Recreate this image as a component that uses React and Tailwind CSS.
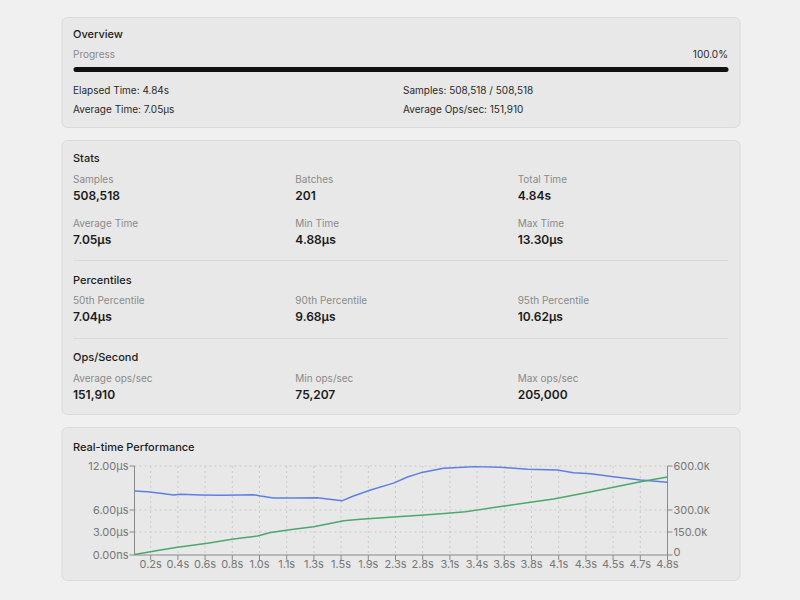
import React from "react";

const blue = [[134,491],[147,491.7],[160,493.3],[173,495],[180,494.3],[200,495],[220,495.3],[240,495],[253,494.7],[260,496],[273,498],[293,498],[317,497.7],[327,499],[342,500.7],[353,496],[370,490],[393,483.2],[407,477],[420,472.8],[443,468.2],[467,467],[473,466.6],[500,467.2],[527,469.3],[557,470],[573,472.7],[590,473.7],[613,476.7],[640,480],[667,482.3]];
const green = [[134,554.5],[160,550],[177,547.3],[207,543.3],[233,539],[257,536],[270,532.5],[293,529.3],[313,526.7],[327,524],[343,520.7],[360,519.2],[393,517],[420,515.2],[447,513.3],[465,511.8],[500,506.5],[530,502.3],[553,499],[583,493.3],[613,487.3],[640,481.7],[667,477]];

const OX = 73, OY = 458;
const pts = (arr) => arr.map(([x, y]) => `${x - OX},${y - OY}`).join(" ");

const xLabels = ["0.2s","0.4s","0.6s","0.8s","1.0s","1.1s","1.3s","1.5s","1.9s","2.3s","2.8s","3.1s","3.4s","3.6s","3.8s","4.1s","4.3s","4.5s","4.7s","4.8s"];

function Chart() {
  const L = 134 - OX, R = 667 - OX, T = 466 - OY, B = 555 - OY;
  const yTicks = [
    { y: T, l: "12.00µs", r: "600.0k" },
    { y: 510 - OY, l: "6.00µs", r: "300.0k" },
    { y: 532 - OY, l: "3.00µs", r: "150.0k" },
    { y: B, l: "0.00ns", r: "0" },
  ];
  const xs = xLabels.map((_, i) => R - (19 - i) * 27.2);
  return (
    <svg width="655" height="112" className="block" style={{ fontFamily: "Inter, 'Noto Sans', sans-serif" }}>
      {yTicks.slice(0, 3).map((t, i) => (
        <line key={"h" + i} x1={L} x2={R} y1={t.y} y2={t.y} stroke="#c9c9c9" strokeDasharray="2 3" strokeWidth="1" />
      ))}
      {xs.map((x, i) => (
        <line key={"v" + i} x1={x} x2={x} y1={T} y2={B} stroke="#c9c9c9" strokeDasharray="2 3" strokeWidth="1" />
      ))}
      <line x1={L} x2={L} y1={T} y2={B} stroke="#8a8a8a" strokeWidth="1" />
      <line x1={R} x2={R} y1={T} y2={B} stroke="#8a8a8a" strokeWidth="1" />
      <line x1={L} x2={R} y1={B} y2={B} stroke="#8a8a8a" strokeWidth="1" />
      {yTicks.map((t, i) => (
        <g key={"y" + i}>
          <line x1={L - 5} x2={L} y1={t.y} y2={t.y} stroke="#8a8a8a" />
          <line x1={R} x2={R + 5} y1={t.y} y2={t.y} stroke="#8a8a8a" />
          <text x={L - 6} y={t.y + 4} textAnchor="end" fontSize="11" fill="#777">{t.l}</text>
          <text x={R + 6} y={t.y + (i === 3 ? 1 : 4)} textAnchor="start" fontSize="11" fill="#777">{t.r}</text>
        </g>
      ))}
      {xs.map((x, i) => (
        <g key={"x" + i}>
          <line x1={x} x2={x} y1={B} y2={B + 5} stroke="#8a8a8a" />
          <text x={x} y={B + 13} textAnchor="middle" fontSize="11" fill="#777">{xLabels[i]}</text>
        </g>
      ))}
      <polyline points={pts(blue)} fill="none" stroke="#5b80e4" strokeWidth="1.4" strokeLinejoin="round" />
      <polyline points={pts(green)} fill="none" stroke="#4aa86a" strokeWidth="1.4" strokeLinejoin="round" />
    </svg>
  );
}

function Cell({ label, value }) {
  return (
    <div className="flex flex-col">
      <div className="text-[10px] leading-[14px] text-[#8a8a8a]">{label}</div>
      <div className="pt-[1px] text-[12px] leading-[18px] font-semibold text-[#1a1a1a]">{value}</div>
    </div>
  );
}

function Section({ title, rows, pt, mt }) {
  return (
    <div className={pt}>
      <div className="text-[11px] leading-[16px] font-medium text-[#1c1c1c]">{title}</div>
      <div className={mt + " grid grid-cols-3 gap-x-3 gap-y-[11px]"}>
        {rows.map((c) => (
          <Cell key={c[0]} label={c[0]} value={c[1]} />
        ))}
      </div>
    </div>
  );
}

export default function App() {
  return (
    <div className="min-h-[600px] bg-[#f0f0f0] pt-[17px]" style={{ fontFamily: "Inter, 'Noto Sans', sans-serif" }}>
      <div className="mx-auto w-[679px] flex flex-col gap-3 translate-x-[0.5px]">
        {/* Overview */}
        <div className="rounded-md border border-[#dadada] bg-[#e8e8e8] px-[11px] pt-[8px] pb-[11px]">
          <div className="text-[11px] leading-[16px] font-medium text-[#1c1c1c]">Overview</div>
          <div className="mt-[5px] flex justify-between text-[10px] leading-[14px]">
            <span className="text-[#8a8a8a]">Progress</span>
            <span className="text-[#2a2a2a]">100.0%</span>
          </div>
          <div className="mt-[6px] h-[5px] rounded-full bg-[#111]" />
          <div className="mt-[11px] grid grid-cols-2 gap-x-[5px] gap-y-[5px] text-[10px] leading-[14px] text-[#2a2a2a]">
            <div>Elapsed Time: 4.84s</div>
            <div>Samples: 508,518 / 508,518</div>
            <div>Average Time: 7.05µs</div>
            <div>Average Ops/sec: 151,910</div>
          </div>
        </div>

        {/* Stats */}
        <div className="rounded-md border border-[#dadada] bg-[#e8e8e8] px-[11px] pb-[10px]">
          <div className="pb-[11px] border-b border-[#d9d9d9]">
            <Section
              pt="pt-[9px]"
              mt="mt-[6px]"
              title="Stats"
              rows={[
                ["Samples", "508,518"],
                ["Batches", "201"],
                ["Total Time", "4.84s"],
                ["Average Time", "7.05µs"],
                ["Min Time", "4.88µs"],
                ["Max Time", "13.30µs"],
              ]}
            />
          </div>
          <div className="pb-3 border-b border-[#d9d9d9]">
            <Section
              pt="pt-[11px]"
              mt="mt-[5px]"
              title="Percentiles"
              rows={[
                ["50th Percentile", "7.04µs"],
                ["90th Percentile", "9.68µs"],
                ["95th Percentile", "10.62µs"],
              ]}
            />
          </div>
          <Section
            pt="pt-[10px]"
            mt="mt-[6px]"
            title="Ops/Second"
            rows={[
              ["Average ops/sec", "151,910"],
              ["Min ops/sec", "75,207"],
              ["Max ops/sec", "205,000"],
            ]}
          />
        </div>

        {/* Chart */}
        <div className="rounded-md border border-[#dadada] bg-[#e8e8e8] px-[11px] pt-[11px] pb-[10px]">
          <div className="text-[11px] leading-[16px] font-medium text-[#1c1c1c]">Real-time Performance</div>
          <div className="mt-[3px]">
            <Chart />
          </div>
        </div>
      </div>
    </div>
  );
}
